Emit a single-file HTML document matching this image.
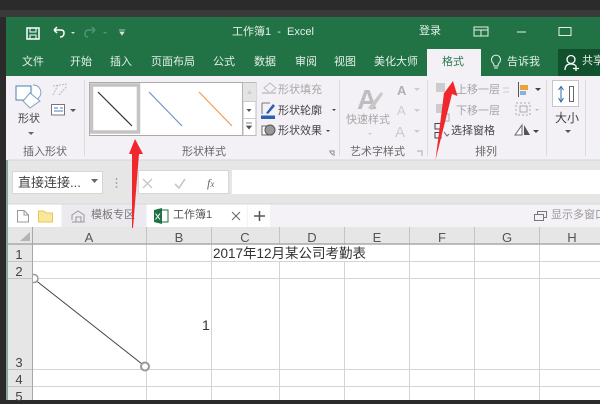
<!DOCTYPE html>
<html lang="zh"><head><meta charset="utf-8"><style>
html,body{margin:0;padding:0}
html{background:#2b2b2b}
body{width:600px;height:400px;overflow:hidden;position:relative;background:#2b2b2b;font-family:"Liberation Sans","Noto Sans CJK SC",sans-serif;filter:blur(.3px)}
div,span{position:absolute}
.t{white-space:nowrap;line-height:1}
.w{color:#e4efe8;font-size:11px}
.g{color:#444;font-size:11px}
.d{color:#a6a6a6;font-size:11px}
.l{color:#666;font-size:11px}
.h{color:#555;font-size:13px;width:20px;text-align:center;line-height:1}
.r{color:#444;font-size:13px;width:20px;left:9px;text-align:center;line-height:1}
svg{position:absolute;left:0;top:0}
</style></head><body>
<div style="left:0;top:10px;width:600px;height:7px;background:#3a3a3a"></div>
<div style="left:6px;top:17px;width:594px;height:59px;background:#217346"></div>
<div style="left:6px;top:76px;width:594px;height:84px;background:#f3f1f5"></div>
<div style="left:6px;top:160px;width:594px;height:45px;background:#e6e6e6"></div>
<div style="left:6px;top:204px;width:594px;height:24px;background:#f4f2f6"></div>
<div style="left:6px;top:227px;width:594px;height:173px;background:#fff"></div>
<div style="left:6px;top:160px;width:2px;height:240px;background:#8aa898"></div>
<div style="left:427px;top:49px;width:54px;height:28px;background:#f3f1f5"></div>
<div style="left:558px;top:49px;width:42px;height:27px;background:#12512e"></div>

<span class="t" style="left:232px;top:27px;color:#e4efe8;font-size:11px">工作簿1&nbsp; -&nbsp; Excel</span>
<span class="t w" style="left:419px;top:26px">登录</span>
<span class="t w" style="left:22px;top:57px">文件</span>
<span class="t w" style="left:70px;top:57px">开始</span>
<span class="t w" style="left:110px;top:57px">插入</span>
<span class="t w" style="left:151px;top:57px">页面布局</span>
<span class="t w" style="left:213px;top:57px">公式</span>
<span class="t w" style="left:254px;top:57px">数据</span>
<span class="t w" style="left:295px;top:57px">审阅</span>
<span class="t w" style="left:334px;top:57px">视图</span>
<span class="t w" style="left:374px;top:57px">美化大师</span>
<span class="t" style="left:442px;top:57px;font-size:11px;color:#2b7a4e">格式</span>
<span class="t w" style="left:507px;top:57px">告诉我</span>
<span class="t w" style="left:582px;top:56px">共享</span>

<span class="t g" style="left:18px;top:114px">形状</span>
<span class="t l" style="left:23px;top:147px">插入形状</span>
<span class="t l" style="left:182px;top:147px">形状样式</span>
<span class="t d" style="left:278px;top:85px">形状填充</span>
<span class="t g" style="left:278px;top:106px">形状轮廓</span>
<span class="t g" style="left:278px;top:126px">形状效果</span>
<span class="t d" style="left:346px;top:115px">快速样式</span>
<span class="t l" style="left:350px;top:147px">艺术字样式</span>
<span class="t d" style="left:456px;top:85px">上移一层</span>
<span class="t d" style="left:456px;top:106px">下移一层</span>
<span class="t g" style="left:451px;top:126px">选择窗格</span>
<span class="t l" style="left:475px;top:147px">排列</span>
<span class="t g" style="left:555px;top:112px;font-size:12px">大小</span>

<div style="left:12px;top:171px;width:91px;height:23px;background:#fff;border:1px solid #d6d6d6;box-sizing:border-box"></div>
<span class="t" style="left:18px;top:176px;font-size:13px;color:#444">直接连接...</span>
<div style="left:138px;top:170px;width:91px;height:24px;background:#fff;border:1px solid #d6d6d6;box-sizing:border-box"></div>
<div style="left:232px;top:170px;width:368px;height:24px;background:#fff"></div>
<span class="t" style="left:207px;top:176px;font:italic 12px 'Liberation Serif',serif;color:#666">f<span style="position:static;font-size:9px">x</span></span>

<div style="left:8px;top:204px;width:53px;height:23px;background:#fff"></div>
<div style="left:62px;top:204px;width:84px;height:23px;background:#eceaee"></div>
<div style="left:147px;top:204px;width:100px;height:23px;background:#fff"></div>
<div style="left:248px;top:204px;width:22px;height:23px;background:#fff"></div>
<span class="t" style="left:91px;top:210px;font-size:11px;color:#777">模板专区</span>
<span class="t" style="left:173px;top:210px;font-size:11px;color:#555">工作簿1</span>
<span class="t" style="left:551px;top:210px;font-size:11px;color:#999">显示多窗口</span>

<div style="left:8px;top:227px;width:592px;height:17px;background:#e6e6e6"></div>
<div style="left:8px;top:244px;width:24px;height:156px;background:#e6e6e6"></div>
<span class="h" style="left:79px;top:231px">A</span>
<span class="h" style="left:169px;top:231px">B</span>
<span class="h" style="left:235px;top:231px">C</span>
<span class="h" style="left:302px;top:231px">D</span>
<span class="h" style="left:367px;top:231px">E</span>
<span class="h" style="left:432px;top:231px">F</span>
<span class="h" style="left:497px;top:231px">G</span>
<span class="h" style="left:562px;top:231px">H</span>
<span class="r" style="top:248px">1</span>
<span class="r" style="top:265px">2</span>
<span class="r" style="top:356px">3</span>
<span class="r" style="top:373px">4</span>
<span class="r" style="top:390px">5</span>

<svg width="600" height="400" viewBox="0 0 600 400" fill="none">
<defs><clipPath id="c"><rect x="33" y="260" width="20" height="40"/></clipPath></defs>
<!-- grid -->
<g stroke="#d4d4d4" stroke-width="1">
<path d="M32 261.500H600M32 278.500H600M32 369.500H600M32 386.500H600"/>
<path d="M146.500 244V400M211.500 244V400M279.500 244V400M344.500 244V400M409.500 244V400M474.500 244V400M539.500 244V400"/>
</g>
<rect x="212" y="245" width="133" height="16" fill="#fff"/>
<path d="M8 261.500H32M8 278.500H32M8 369.500H32M8 386.500H32" stroke="#c4c4c4"/>
<path d="M146.500 227V244M211.500 227V244M279.500 227V244M344.500 227V244M409.500 227V244M474.500 227V244M539.500 227V244" stroke="#c4c4c4"/>
<path d="M8 244H600" stroke="#a8a8a8" stroke-width="1.500"/>
<path d="M32.500 227V400" stroke="#a8a8a8"/>
<path d="M30 232V241H20Z" fill="#b4b4b4"/>
<!-- line shape -->
<path d="M34 279L142 364" stroke="#444" stroke-width="1"/>
<circle cx="34" cy="278.500" r="4" fill="#fff" stroke="#999" stroke-width="1.500" clip-path="url(#c)"/>
<circle cx="145" cy="366.500" r="4" fill="#fff" stroke="#999" stroke-width="2"/>

<!-- title bar icons -->
<g stroke="#fff" stroke-width="1.500"><path d="M27 28H39V39H27Z"/><path d="M30 28V32H36V28M30 39V35H36V39" stroke-width="1"/></g>
<path d="M54 30H61Q64 30 64 33Q64 37 60 37M54 30L57 27M54 30L57 33" stroke="#fff" stroke-width="1.500"/>
<path d="M71 32L75 32L73 34Z" fill="#ddd"/>
<path d="M95 30H89Q85 30 85 34Q85 37 88 37M95 30L92 27M95 30L92 33" stroke="#4f9570" stroke-width="1.500"/>
<path d="M103 32L107 32L105 34Z" fill="#4f9570"/>
<path d="M119 30H125M120 32H124L122 35Z" stroke="#ddd" fill="#ddd" stroke-width=".8"/>
<path d="M474 27H488V36H474ZM474 30H488M481 30V36" stroke="#e8f0eb" stroke-width="1"/>
<path d="M517 32H526" stroke="#e8f0eb" stroke-width="1"/>
<path d="M559 27.500H571V35.500H559Z" stroke="#e8f0eb" stroke-width="1"/>
<path d="M499 63A4.500 4.500 0 1 0 493 63Q494 64 494 66H498Q498 64 499 63ZM494 68H498" stroke="#e8f0eb" stroke-width="1"/>
<circle cx="571" cy="59.500" r="4" stroke="#fff" stroke-width="1.300"/>
<path d="M565 70Q565 64 571 64Q574 64 575.500 65.500M573 68.500H579M576 65.500V71" stroke="#fff" stroke-width="1.300"/>

<!-- shape icons -->
<path d="M33 85A7.500 7.500 0 0 1 40 96L32 106" stroke="#7f9ec4" fill="#fff"/>
<path d="M16 86H31V100H16Z" fill="#fff" stroke="#4a7ebb"/>
<path d="M30 93L40 101L30 108L23 101Z" fill="#fff" stroke="#7f9ec4"/>
<path d="M53 86L67 84M53 95L58 85M59 95L67 86" stroke="#bbb" stroke-dasharray="2 1"/>
<path d="M51.500 104.500H64.500V115H51.500Z" fill="#fff" stroke="#777"/>
<path d="M54 108H58M60 108H63M54 111H63" stroke="#4a7ebb"/>
<path d="M70 109H76L73 112Z" fill="#555"/>
<path d="M28 132H34L31 135Z" fill="#666"/>
<!-- gallery -->
<path d="M89.500 82.500H242.500V135.500H89.500Z" fill="#fff" stroke="#aaa"/>
<path d="M91.500 85H138.500V132H91.500Z" fill="#fff" stroke="#c4c4c4" stroke-width="3.500"/>
<path d="M98 92L132 126" stroke="#333" stroke-width="1.200"/>
<path d="M149 92L182 126" stroke="#6f93c9" stroke-width="1.200"/>
<path d="M199 92L232 126" stroke="#ed9c5a" stroke-width="1.200"/>
<path d="M243 82.500H256V135.500H243Z" fill="#fff" stroke="#bbb"/>
<path d="M243 83H256V101H243Z" fill="#e4e4e4"/>
<path d="M243 101.500H256M243 118.500H256" stroke="#ccc"/>
<path d="M247 94L249.500 90L252 94Z" fill="#ccc"/>
<path d="M246.500 109H251.500L249 112Z" fill="#555"/>
<path d="M246 123H252M246.500 126H251.500L249 129Z" stroke="#555" fill="#555" stroke-width=".7"/>
<!-- ribbon separators -->
<path d="M84.500 80V156M339.500 80V156M427.500 80V156M546.500 80V156M585.500 80V156" stroke="#dcdadd"/>
<!-- format icons -->
<path d="M264 88L270 83L276 88L270 93Z" fill="#f3f1f5" stroke="#bbb"/><path d="M262 93L276 93" stroke="#ccc" stroke-width="2"/>
<path d="M261 119H275V115.500H261Z" fill="#2f5fb5"/><path d="M266 113L273 104L275 106L268 114Z" fill="#2f5fb5"/><path d="M262 103H270M262 103V114" stroke="#777"/>
<path d="M262 126H272V135H262Z" fill="#fff" stroke="#666"/><circle cx="270" cy="130" r="5" fill="#999" stroke="#555"/>
<path d="M332 109H336L334 111Z" fill="#444"/><path d="M326 130H330L328 132Z" fill="#444"/>
<!-- text art -->
<text x="357" y="109" font-family="Liberation Sans" font-size="28" font-weight="bold" fill="#bdbdbd">A</text>
<path d="M368 108L381 92L383 94L372 110Z" fill="#c8c8c8"/>
<path d="M368 133H372L370 135Z" fill="#ccc"/>
<text x="397" y="95" font-family="Liberation Sans" font-size="13" font-weight="bold" fill="#b0b0b0">A</text>
<text x="397" y="115" font-family="Liberation Sans" font-size="13" fill="#ccc">A</text>
<text x="395" y="137" font-family="Liberation Sans" font-size="15" fill="#ccc">A</text>
<path d="M414 88H420L417 91ZM414 109H420L417 112ZM414 130H420L417 133Z" fill="#ccc"/>
<!-- arrange icons -->
<path d="M436 83H445V92H436ZM436 104H445V113H436Z" fill="#ccc"/>
<path d="M442 114H449V121H442Z" stroke="#aaa" fill="#f3f1f5"/>
<path d="M435 123.500H441V129H435ZM435 132.500H441V138H435Z" stroke="#444"/>
<path d="M444 132L447 136L449 134" stroke="#666"/>
<path d="M503 88H509M503 92H509" stroke="#ccc" stroke-width="1"/>
<path d="M518.500 82V97" stroke="#555"/>
<path d="M520 85H528V90H520Z" fill="#e8a33c"/><path d="M520 91H526V95H520Z" fill="#8bb0dc"/>
<path d="M535 88H541L538 91Z" fill="#444"/>
<path d="M516 103H530V115H516Z" stroke="#aaa" stroke-dasharray="2 2"/><path d="M520 106H527V112H520Z" stroke="#aaa"/>
<path d="M535 109H539L537 111Z" fill="#bbb"/>
<path d="M515 135L522 125V135Z" stroke="#666" fill="#fff"/><path d="M524 125L530 135H524Z" fill="#555"/>
<path d="M533 130H539L536 133Z" fill="#444"/>
<path d="M552.500 80.500H578.500V106.500H552.500Z" fill="#fff" stroke="#c6c6c6"/>
<path d="M561 87V101M558.500 90L561 86.500L563.500 90M558.500 98L561 102L563.500 98" stroke="#2f6cb0"/>
<path d="M569.500 86.500H573.500V101.500H569.500Z" stroke="#666"/>
<path d="M565 130H571L568 133Z" fill="#555"/>
<path d="M329 151H334V156M333 155L330 152" stroke="#888"/><path d="M417 151H422V156" stroke="#aaa"/>
<!-- formula bar -->
<path d="M8 160H600" stroke="#d6d6d6"/><path d="M8 204H600" stroke="#d8d8d8"/>
<path d="M91 179H98L94.500 183Z" fill="#666"/>
<path d="M116.500 178V180M116.500 182V184M116.500 186V188" stroke="#aaa" stroke-width="1.500"/>
<path d="M143 179L152 188M152 179L143 188" stroke="#c8c8c8" stroke-width="1.400"/>
<path d="M175 184L179 188L185 179" stroke="#c8c8c8" stroke-width="1.600"/>
<!-- tab bar icons -->
<path d="M17.500 210.500H24L28.500 215V222H17.500ZM24 210.500V215H28.500" stroke="#999" fill="#fff"/>
<path d="M38.500 211H44L46 213H52.500V222H38.500Z" fill="#f9e79f" stroke="#e6c94f"/>
<path d="M72 220V215L78 211L84 215V222H72M76 222V217H81V222" stroke="#999"/>
<path d="M157 210H168V222H157Z" fill="#fff" stroke="#1e7145"/>
<path d="M154 210L162 208V224L154 222Z" fill="#1e7145"/>
<path d="M155.500 213.500L160 219.500M160 213.500L155.500 219.500" stroke="#fff"/>
<path d="M232 212L240 220M240 212L232 220" stroke="#666"/>
<path d="M259.500 211V221M254 216H265" stroke="#555" stroke-width="1.500"/>
<path d="M534.500 214.500H543.500V220.500H534.500Z" stroke="#777" fill="#f4f2f6"/>
<path d="M537.500 214V211.500H546.500V217.500H544" stroke="#777"/>
<!-- red arrows -->
<path d="M135 139L143 154H139L133 228L132 228L132 154H129Z" fill="#f0272d"/>
<path d="M453 81L457.500 96L452 94L435.500 160L444 93L442 96Z" fill="#f0272d"/>
</svg>
<span class="t" style="left:213px;top:247px;font-size:13.500px;color:#333">2017年12月某公司考勤表</span>
<span class="t" style="left:202px;top:318px;font-size:14px;color:#333">1</span>
</body></html>
